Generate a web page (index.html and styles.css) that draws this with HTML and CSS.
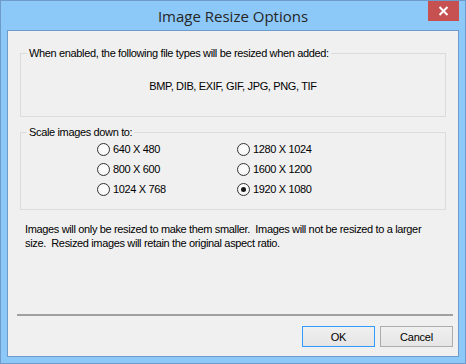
FILE: index.html
```html
<!DOCTYPE html>
<html>
<head>
<meta charset="utf-8">
<link rel="stylesheet" href="styles.css">
</head>
<body>
<div class="window">
  <div class="titlebar">
    <span class="title">Image Resize Options</span>
    <div class="close"><svg width="11" height="10" viewBox="0 0 11 10"><path d="M1.5 1 L9.5 9 M9.5 1 L1.5 9" stroke="#fff" stroke-width="2"/></svg></div>
  </div>
  <div class="client">
    <fieldset class="group group-types">
      <legend>When enabled, the following file types will be resized when added:</legend>
      <div class="types">BMP, DIB, EXIF, GIF, JPG, PNG, TIF</div>
    </fieldset>
    <fieldset class="group group-scale">
      <legend>Scale images down to:</legend>
      <div class="radios">
        <label class="radio"><span class="dot"></span>640 X 480</label>
        <label class="radio"><span class="dot"></span>1280 X 1024</label>
        <label class="radio"><span class="dot"></span>800 X 600</label>
        <label class="radio"><span class="dot"></span>1600 X 1200</label>
        <label class="radio"><span class="dot"></span>1024 X 768</label>
        <label class="radio checked"><span class="dot"></span>1920 X 1080</label>
      </div>
    </fieldset>
    <p class="note">Images will only be resized to make them smaller.&nbsp; Images will not be resized to a larger size.&nbsp; Resized images will retain the original aspect ratio.</p>
    <div class="spacer"></div>
    <div class="separator"></div>
    <div class="buttons">
      <button class="btn btn-default">OK</button>
      <button class="btn">Cancel</button>
    </div>
  </div>
</div>
</body>
</html>
```
FILE: styles.css
```css
html, body {
  margin: 0;
  padding: 0;
  width: 466px;
  height: 364px;
  overflow: hidden;
  background: #8cc8f8;
}
.window {
  position: relative;
  box-sizing: border-box;
  width: 466px;
  height: 364px;
  border: 1px solid #6f9bcb;
  background: #8cc8f8;
  padding: 0 6px 6px 6px;
  display: flex;
  flex-direction: column;
}
.titlebar {
  height: 29px;
  display: flex;
  align-items: center;
  justify-content: center;
}
.title {
  font-family: "Open Sans", "Noto Sans", sans-serif;
  font-size: 15px;
  color: #262626;
  padding-top: 1px;
}
.close {
  position: absolute;
  top: 0;
  right: 6px;
  width: 31px;
  height: 20px;
  background: #c75050;
  display: flex;
  align-items: center;
  justify-content: center;
}
.client {
  flex: 1;
  border: 1px solid #6f9bcb;
  background: #f0f0f0;
  display: flex;
  flex-direction: column;
  font-family: "Liberation Sans", Arial, sans-serif;
  font-size: 11px;
  letter-spacing: -0.35px;
  color: #000;
  padding: 0 5px 0 12px;
}
.group {
  margin: 0;
  border: 1px solid #dcdcdc;
  padding: 0 6px;
  width: 426px;
  box-sizing: border-box;
}
.group legend {
  padding: 0 2px;
  line-height: 13px;
}
.group-types {
  margin-top: 16px;
  height: 70px;
}
.types {
  text-align: center;
  padding-top: 20px;
  line-height: 13px;
}
.group-scale {
  margin-top: 9px;
  height: 84px;
}
.radios {
  display: grid;
  grid-template-columns: 140px 140px;
  grid-auto-rows: 20px;
  padding-left: 70px;
}
.radio {
  display: flex;
  align-items: center;
  gap: 3px;
}
.dot {
  width: 13px;
  height: 13px;
  box-sizing: border-box;
  border: 1px solid #333;
  border-radius: 50%;
  background: radial-gradient(circle at 50% 40%, #ffffff, #f2f2f2);
  display: flex;
  align-items: center;
  justify-content: center;
}
.checked .dot::after {
  content: "";
  width: 5px;
  height: 5px;
  border-radius: 50%;
  background: #1a1a1a;
}
.note {
  margin: 12px 0 0 5px;
  width: 420px;
  line-height: 14px;
}
.spacer {
  flex: 1;
}
.separator {
  height: 2px;
  background: #a0a0a0;
  margin: 0 0 10px -3px;
  width: 436px;
}
.buttons {
  display: flex;
  justify-content: flex-end;
  gap: 5px;
  margin: 0 0 9px 0;
}
.btn {
  width: 73px;
  height: 21px;
  box-sizing: border-box;
  border: 1px solid #acacac;
  background: linear-gradient(#f0f0f0, #e5e5e5);
  font-family: "Liberation Sans", Arial, sans-serif;
  font-size: 11px;
  letter-spacing: -0.2px;
  color: #000;
  padding: 0;
  margin: 0;
}
.btn-default {
  border-color: #3399ff;
}
```
